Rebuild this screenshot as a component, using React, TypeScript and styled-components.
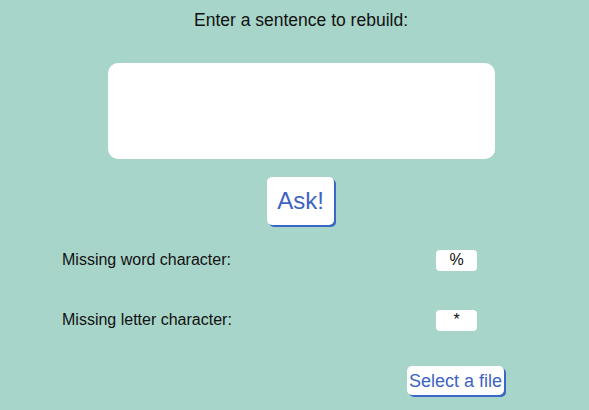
import React, { useState } from 'react';
import styled, { createGlobalStyle } from 'styled-components';

const GlobalStyle = createGlobalStyle`
  html, body {
    margin: 0;
    padding: 0;
    background: #a8d5c9;
  }
  body {
    font-family: 'Liberation Sans', Arial, sans-serif;
    color: #111;
  }
`;

const Page = styled.div`
  width: 589px;
  height: 410px;
  display: flex;
  flex-direction: column;
  align-items: center;
  background: #a8d5c9;
`;

const Title = styled.label`
  margin-top: 9px;
  font-size: 17.5px;
  line-height: 22px;
  margin-left: 13px;
`;

const SentenceBox = styled.textarea`
  margin-top: 32px;
  margin-left: 14px;
  width: 387px;
  height: 96px;
  box-sizing: border-box;
  border: none;
  border-radius: 10px;
  background: #fff;
  resize: none;
  outline: none;
  padding: 8px;
  font-family: inherit;
  font-size: 16px;
`;

const ShadowButton = styled.button<{ size: number; pad: string }>`
  font-family: 'Liberation Sans', Arial, sans-serif;
  font-size: ${({ size }) => size}px;
  line-height: 1;
  color: #3d63c3;
  background: #fff;
  border: none;
  border-radius: 5px;
  padding: ${({ pad }) => pad};
  box-shadow: 2px 2px 0 #3a66c6;
  cursor: pointer;
`;

const AskButton = styled(ShadowButton)`
  margin-top: 18px;
  margin-left: 12px;
  height: 48px;
`;

const Options = styled.div`
  align-self: stretch;
  display: grid;
  grid-template-columns: 374px 41px;
  grid-auto-rows: 60px;
  padding-left: 62px;
  margin-top: 5px;
  align-items: center;
`;

const OptionLabel = styled.span`
  font-size: 16px;
  color: #111;
`;

const CharInput = styled.input`
  width: 41px;
  height: 21px;
  box-sizing: border-box;
  border: none;
  border-radius: 4px;
  background: #fff;
  text-align: center;
  font-family: inherit;
  font-size: 16px;
  color: #111;
  padding: 0;
  outline: none;
`;

const Footer = styled.div`
  align-self: stretch;
  display: flex;
  justify-content: flex-end;
  padding-right: 85px;
  margin-top: 16px;
`;

const FileButton = styled(ShadowButton)`
  height: 29px;
`;

export default function App() {
  const [sentence, setSentence] = useState('');
  const [wordChar, setWordChar] = useState('%');
  const [letterChar, setLetterChar] = useState('*');

  return (
    <>
      <GlobalStyle />
      <Page>
        <Title htmlFor="sentence">Enter a sentence to rebuild:</Title>
        <SentenceBox
          id="sentence"
          value={sentence}
          onChange={(e) => setSentence(e.target.value)}
        />
        <AskButton size={24} pad="0 10px">Ask!</AskButton>
        <Options>
          <OptionLabel>Missing word character:</OptionLabel>
          <CharInput value={wordChar} onChange={(e) => setWordChar(e.target.value)} />
          <OptionLabel>Missing letter character:</OptionLabel>
          <CharInput value={letterChar} onChange={(e) => setLetterChar(e.target.value)} />
        </Options>
        <Footer>
          <FileButton size={18} pad="0 2px">Select a file</FileButton>
        </Footer>
      </Page>
    </>
  );
}
